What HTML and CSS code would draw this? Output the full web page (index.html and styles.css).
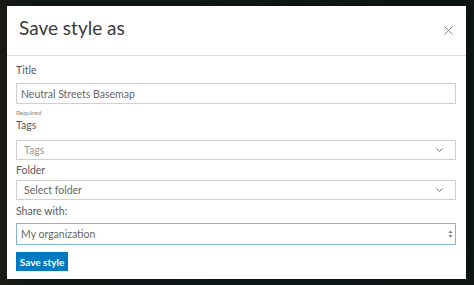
FILE: index.html
```html
<!DOCTYPE html>
<html lang="en">

<head>
  <meta charset="UTF-8">
  <title>Save style as</title>
  <link rel="stylesheet" href="styles.css">
</head>

<body>

  <!-- modal over the blurred map -->
  <div class="modal">
    <div class="modal-header">
      <h1 class="modal-title">Save style as</h1>
      <button class="close" type="button" aria-label="Close">
        <svg width="9" height="9" viewBox="0 0 9 9">
          <path d="M0.5 0.5 L8.5 8.5 M8.5 0.5 L0.5 8.5" stroke="#8a8a8a" stroke-width="1" fill="none" />
        </svg>
      </button>
    </div>

    <form class="modal-body">
      <label class="label label-title">Title</label>
      <input class="input input-title" type="text" value="Neutral Streets Basemap">
      <div class="hint">Required</div>

      <label class="label label-tags">Tags</label>
      <div class="input select select-tags">
        <span class="placeholder">Tags</span>
        <svg class="chevron" width="7" height="4" viewBox="0 0 7 4">
          <path d="M0.5 0.5 L3.5 3.5 L6.5 0.5" stroke="#777" stroke-width="1" fill="none" />
        </svg>
      </div>

      <label class="label label-folder">Folder</label>
      <div class="input select select-folder">
        <span>Select folder</span>
        <svg class="chevron" width="7" height="4" viewBox="0 0 7 4">
          <path d="M0.5 0.5 L3.5 3.5 L6.5 0.5" stroke="#777" stroke-width="1" fill="none" />
        </svg>
      </div>

      <label class="label label-share">Share with:</label>
      <div class="input select select-share">
        <span>My organization</span>
        <svg class="updown" width="5" height="8" viewBox="0 0 5 8">
          <path d="M0.5 3 L2.5 0.5 L4.5 3 Z M0.5 5 L2.5 7.5 L4.5 5 Z" fill="#777" />
        </svg>
      </div>

      <button class="btn-save" type="button">Save style</button>
    </form>
  </div>

</body>

</html>
```

FILE: styles.css
```css
body {
  margin: 0;
  height: 285px;
  background: linear-gradient(90deg, #1b1a15 0%, #0f1714 8%, #0b1614 60%, #0d1412 100%);
  font-family: Lato, "Open Sans", sans-serif;
  overflow: hidden;
}

.modal {
  margin: 6px 8px 0 7px;
  width: 459px;
  height: 273px;
  background: #fff;
  box-sizing: border-box;
}

/* header */
.modal-header {
  height: 49px;
  border-bottom: 1px solid #dcdcdc;
  display: flex;
  align-items: center;
  justify-content: space-between;
  padding: 0 12px;
}

.modal-title {
  margin: 0;
  font-size: 19px;
  font-weight: 400;
  color: #3a3a3a;
  position: relative;
  top: -3px;
}

.close {
  border: none;
  background: none;
  padding: 0;
  margin-right: 1px;
  display: flex;
}

/* body */
.modal-body {
  display: flex;
  flex-direction: column;
  align-items: flex-start;
  padding: 7px 10px 0 9px;
}

.label {
  font-size: 10.5px;
  line-height: 14px;
  color: #5a5a5a;
}

.input {
  box-sizing: border-box;
  width: 100%;
  border: 1px solid #cfcfcf;
  font-family: inherit;
  font-size: 10.5px;
  color: #666;
  padding: 0 4px;
  margin: 0;
  outline: none;
}

.input-title {
  height: 21px;
  margin-top: 6px;
}

.hint {
  font-size: 6.5px;
  line-height: 10px;
  color: #888;
  margin-top: 4px;
}

.select {
  display: flex;
  align-items: center;
  justify-content: space-between;
  padding: 0 12px 0 7px;
}

.placeholder {
  color: #999;
}

.select-tags {
  height: 20px;
  margin-top: 8px;
}

.label-folder {
  margin-top: 3px;
}

.select-folder {
  height: 20px;
  margin-top: 3px;
}

.label-share {
  margin-top: 4px;
}

.select-share {
  height: 22px;
  margin-top: 5px;
  border-color: #85b6d8;
  padding: 0 2px 0 4px;
}

.btn-save {
  margin-top: 7px;
  height: 19px;
  width: 52px;
  padding: 0;
  border: none;
  background: #0079c1;
  color: #fff;
  font-family: inherit;
  font-size: 10px;
  font-weight: 700;
}
```
